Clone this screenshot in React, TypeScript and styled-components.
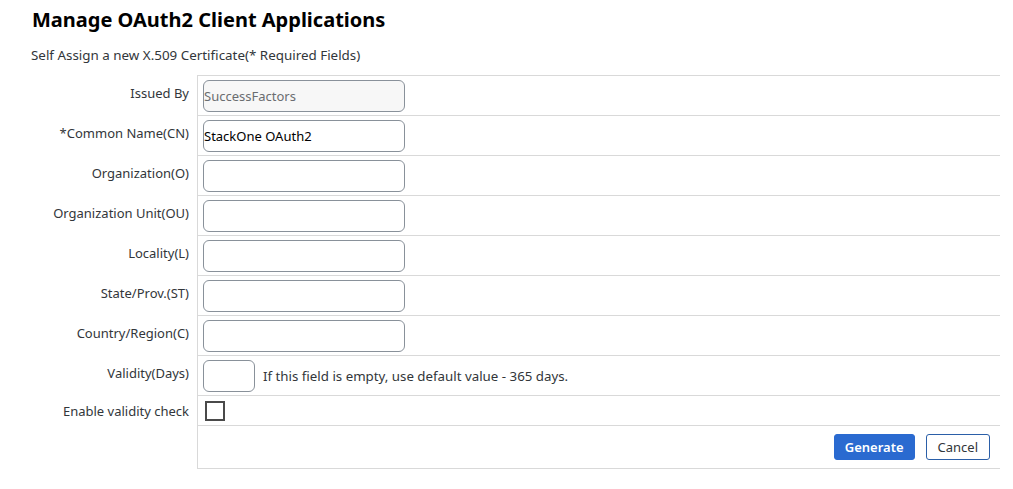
import React from 'react';
import styled, { createGlobalStyle } from 'styled-components';

const GlobalStyle = createGlobalStyle`
  body {
    margin: 0;
    background: #ffffff;
    font-family: "Noto Sans", "Liberation Sans", Arial, sans-serif;
    color: #32363a;
  }
`;

const Page = styled.div`
  padding: 8px 13px 0 0;
`;

const Title = styled.h1`
  margin: 0 0 0 32px;
  font-size: 20px;
  line-height: 24px;
  font-weight: 700;
  color: #000000;
`;

const Subtitle = styled.div`
  margin: 15px 0 0 31px;
  font-size: 13.4px;
  line-height: 16px;
  height: 28px;
`;

const Form = styled.div`
  display: grid;
  grid-template-columns: 197px 1fr;
`;

// $shift moves the label text up (positive) or down (negative) inside its row
const Label = styled.div<{ $h: number; $shift?: number }>`
  height: ${(p) => p.$h}px;
  display: flex;
  align-items: center;
  justify-content: flex-end;
  padding-right: 8px;
  padding-bottom: ${(p) => Math.max(p.$shift ?? 5, 0)}px;
  padding-top: ${(p) => Math.max(-(p.$shift ?? 5), 0)}px;
  font-size: 13px;
  box-sizing: border-box;
`;

const Cell = styled.div<{ $h: number; $last?: boolean }>`
  height: ${(p) => p.$h}px;
  border-top: 1px solid #d9d9d9;
  border-left: 1px solid #d9d9d9;
  border-bottom: ${(p) => (p.$last ? '1px solid #d9d9d9' : 'none')};
  box-sizing: border-box;
  display: flex;
  align-items: center;
  padding-left: 5px;
  gap: 8px;
`;

const Input = styled.input<{ $w?: number; $readOnly?: boolean }>`
  width: ${(p) => p.$w ?? 202}px;
  height: 32px;
  box-sizing: border-box;
  border: 1px solid #89919a;
  border-radius: 6px;
  background: ${(p) => (p.$readOnly ? '#f7f7f7' : '#ffffff')};
  padding: 0;
  font-family: inherit;
  font-size: 13px;
  color: ${(p) => (p.$readOnly ? '#6a6d70' : '#000000')};
  outline: none;
`;

const Hint = styled.span`
  font-size: 13.3px;
`;

const Check = styled.span`
  width: 20px;
  height: 20px;
  box-sizing: border-box;
  border: 2px solid #4a4a4a;
  margin-left: 2px;
`;

const Actions = styled(Cell)`
  justify-content: flex-end;
  padding-right: 10px;
  gap: 11px;
`;

const Button = styled.button<{ $primary?: boolean }>`
  height: 26px;
  box-sizing: border-box;
  border-radius: 3px;
  font-family: inherit;
  font-size: 13px;
  padding: 0 ${(p) => (p.$primary ? 10 : 11)}px;
  border: 1px solid ${(p) => (p.$primary ? '#2a6ad0' : '#2b5fa8')};
  background: ${(p) => (p.$primary ? '#2a6ad0' : '#ffffff')};
  color: ${(p) => (p.$primary ? '#ffffff' : '#32363a')};
  font-weight: ${(p) => (p.$primary ? 600 : 400)};
`;

const fields: { label: string; value?: string; readOnly?: boolean }[] = [
  { label: 'Issued By', value: 'SuccessFactors', readOnly: true },
  { label: '*Common Name(CN)', value: 'StackOne OAuth2' },
  { label: 'Organization(O)' },
  { label: 'Organization Unit(OU)' },
  { label: 'Locality(L)' },
  { label: 'State/Prov.(ST)' },
  { label: 'Country/Region(C)' },
];

const App: React.FC = () => {
  return (
    <Page>
      <GlobalStyle />
      <Title>Manage OAuth2 Client Applications</Title>
      <Subtitle>Self Assign a new X.509 Certificate(* Required Fields)</Subtitle>
      <Form>
        {fields.map((f) => (
          <React.Fragment key={f.label}>
            <Label $h={40}>{f.label}</Label>
            <Cell $h={40}>
              <Input defaultValue={f.value} readOnly={f.readOnly} $readOnly={f.readOnly} />
            </Cell>
          </React.Fragment>
        ))}
        <Label $h={40}>Validity(Days)</Label>
        <Cell $h={40}>
          <Input $w={52} />
          <Hint>If this field is empty, use default value - 365 days.</Hint>
        </Cell>
        <Label $h={30} $shift={-2}>Enable validity check</Label>
        <Cell $h={30}>
          <Check />
        </Cell>
        <div />
        <Actions $h={44} $last>
          <Button $primary>Generate</Button>
          <Button>Cancel</Button>
        </Actions>
      </Form>
    </Page>
  );
};

export default App;
